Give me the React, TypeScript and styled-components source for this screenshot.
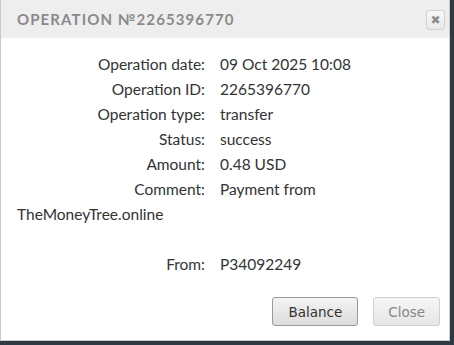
import React from 'react';
import styled, { createGlobalStyle } from 'styled-components';

const Global = createGlobalStyle`
  html, body {
    margin: 0;
    padding: 0;
    background: #2e3b44;
  }
`;

const rows: { label: string; value: string }[] = [
  { label: 'Operation date:', value: '09 Oct 2025 10:08' },
  { label: 'Operation ID:', value: '2265396770' },
  { label: 'Operation type:', value: 'transfer' },
  { label: 'Status:', value: 'success' },
  { label: 'Amount:', value: '0.48 USD' },
  { label: 'Comment:', value: 'Payment from TheMoneyTree.online' },
];

export default function App() {
  return (
    <>
      <Global />
      <Dialog>
        <TitleBar>
          <Title>Operation №2265396770</Title>
          <CloseIcon aria-label="close">✖</CloseIcon>
        </TitleBar>
        <Body>
          {rows.map((r) => (
            <Line key={r.label}>
              <Label>{r.label}</Label>
              <span>{r.value}</span>
            </Line>
          ))}
          <Line>&nbsp;</Line>
          <Line>
            <Label>From:</Label>
            <span>P34092249</span>
          </Line>
        </Body>
        <Footer>
          <Button>Balance</Button>
          <Button $muted>Close</Button>
        </Footer>
      </Dialog>
    </>
  );
}

const Dialog = styled.div`
  width: 450px;
  box-sizing: border-box;
  background: #fff;
  border-left: 1px solid #c9c9c9;
  border-right: 1px solid #c9c9c9;
  border-bottom: 1px solid #c9c9c9;
`;

const TitleBar = styled.div`
  height: 38px;
  background: #eeeeee;
  display: flex;
  align-items: center;
  justify-content: space-between;
  padding: 0 4px 0 16px;
`;

const Title = styled.div`
  font-family: 'Lato', 'DejaVu Sans', sans-serif;
  font-size: 15px;
  font-weight: 700;
  text-transform: uppercase;
  letter-spacing: 1.1px;
  color: #8a8a8a;
`;

const CloseIcon = styled.div`
  width: 19px;
  height: 20px;
  margin-top: 1px;
  box-sizing: border-box;
  border: 1px solid #d0d0d0;
  border-radius: 3px;
  background: linear-gradient(#f7f7f7, #e9e9e9);
  color: #8c8c8c;
  font-size: 12px;
  display: flex;
  align-items: center;
  justify-content: center;
  font-family: 'DejaVu Sans', sans-serif;
`;

const Body = styled.div`
  padding: 14px 16px 0 16px;
  font-family: 'Lato', 'Open Sans', sans-serif;
  font-size: 15.5px;
  line-height: 25px;
  color: #333;
`;

const Line = styled.div``;

const Label = styled.span`
  display: inline-block;
  width: 188px;
  margin-right: 15px;
  text-align: right;
`;

const Footer = styled.div`
  display: flex;
  justify-content: flex-end;
  gap: 15px;
  padding: 20px 9px 14px 0;
`;

const Button = styled.button<{ $muted?: boolean }>`
  height: 29px;
  padding: 0 ${({ $muted }) => ($muted ? '14px' : '15px')};
  font-family: 'DejaVu Sans', sans-serif;
  font-size: 13.5px;
  color: ${({ $muted }) => ($muted ? '#888' : '#333')};
  border: 1px solid ${({ $muted }) => ($muted ? '#d0d0d0' : '#9a9a9a')};
  border-radius: 3px;
  background: ${({ $muted }) =>
    $muted ? 'linear-gradient(#f6f6f6, #e6e6e6)' : 'linear-gradient(#f4f4f4, #dcdcdc)'};
`;
